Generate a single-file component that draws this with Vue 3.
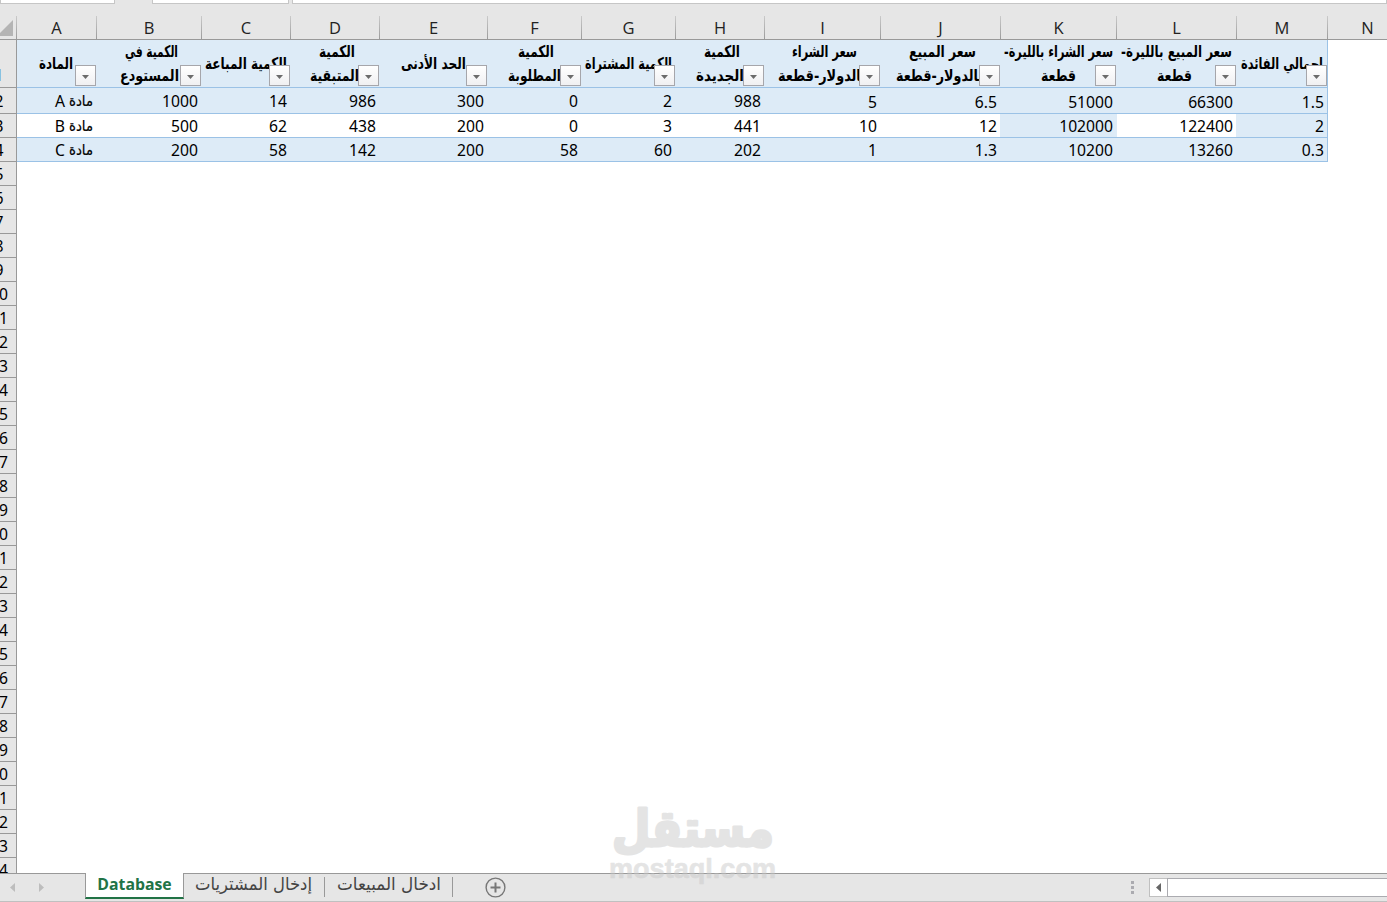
<template>
  <div class="excel">
    <div class="formula-bar">
      <div class="name-box"></div>
      <div class="fx-box"></div>
      <div class="formula-input"></div>
    </div>

    <div class="col-headers">
      <div class="corner">
        <svg width="13" height="16" viewBox="0 0 13 16"><path d="M13 0V16H-3Z" fill="#b4b4b4" /></svg>
      </div>
      <div v-for="c in columns" :key="c.name" class="col-header" :style="{ width: c.width + 'px' }">{{ c.name }}</div>
    </div>

    <div class="sheet">
      <div class="row-headers">
        <div v-for="n in 34" :key="n" class="row-header" :class="{ first: n === 1, second: n === 2 }">
          <span>{{ n }}</span>
        </div>
      </div>

      <div class="table">
        <div class="row head">
          <div v-for="c in tableColumns" :key="c.name" class="head-cell" :style="{ width: c.width + 'px' }">
            <svg
              v-for="line in c.lines"
              :key="line.text"
              class="line"
              :width="line.width"
              height="24"
              :style="{ marginLeft: line.left + 'px' }"
            >
              <text :x="line.width" y="17" direction="rtl" :textLength="line.width" lengthAdjust="spacingAndGlyphs">{{ line.text }}</text>
            </svg>
            <button class="filter">
              <svg width="7" height="4" viewBox="0 0 7 4"><path d="M0 0H7L3.5 4Z" fill="#6b6b6b" /></svg>
            </button>
          </div>
        </div>
        <div v-for="(row, r) in rows" :key="r" class="row" :class="'row-' + r">
          <div
            v-for="(value, i) in row"
            :key="i"
            class="cell"
            :class="{ plain: r === 1 && i !== 10 && i !== 12, edge: r === 1 && (i === 9 || i === 11), low: r === 0 && i > 7 }"
            :style="{ width: columns[i].width + 'px' }"
          >
            <template v-if="i === 0">
              <span class="letter">{{ value }}</span>
              <svg class="item" width="24" height="22">
                <text x="24" y="16" direction="rtl" textLength="24" lengthAdjust="spacingAndGlyphs">مادة</text>
              </svg>
            </template>
            <template v-else>{{ value }}</template>
          </div>
        </div>
      </div>
    </div>

    <div class="tab-bar">
      <div class="tab-nav">
        <svg width="5" height="9" viewBox="0 0 5 9"><path d="M5 0V9L0 4.5Z" fill="#bdbdbd" /></svg>
        <svg width="5" height="9" viewBox="0 0 5 9"><path d="M0 0V9L5 4.5Z" fill="#bdbdbd" /></svg>
      </div>
      <div class="tab active">Database</div>
      <div class="tab purchases">
        <svg width="117" height="27">
          <text x="117" y="16" direction="rtl" textLength="117" lengthAdjust="spacingAndGlyphs">إدخال المشتريات</text>
        </svg>
      </div>
      <div class="tab sales">
        <svg width="104" height="27">
          <text x="104" y="16" direction="rtl" textLength="104" lengthAdjust="spacingAndGlyphs">ادخال المبيعات</text>
        </svg>
      </div>
      <svg class="add" width="21" height="21" viewBox="0 0 21 21">
        <circle cx="10.5" cy="10.5" r="9.4" fill="none" stroke="#777" stroke-width="1.4" />
        <path d="M10.5 5.5V15.5M5.5 10.5H15.5" stroke="#777" stroke-width="2" />
      </svg>
      <div class="grip"><i></i><i></i><i></i></div>
      <div class="scroll-left">
        <svg width="5" height="9" viewBox="0 0 5 9"><path d="M5 0V9L0 4.5Z" fill="#666" /></svg>
      </div>
      <div class="scroll-track"></div>
    </div>

    <svg class="watermark" width="170" height="90" viewBox="0 0 170 90">
      <text class="mark-ar" x="166" y="46" direction="rtl" textLength="162" lengthAdjust="spacingAndGlyphs">مستقل</text>
      <text class="mark-en" x="1" y="78" textLength="167" lengthAdjust="spacingAndGlyphs">mostaql.com</text>
    </svg>
  </div>
</template>

<script setup>
// left = distance from the column's left edge
const columns = [
  { name: 'A', width: 80, lines: [{ text: 'المادة', left: 22, width: 34 }] },
  { name: 'B', width: 105, lines: [{ text: 'الكمية في', left: 28, width: 53 }, { text: 'المستودع', left: 23, width: 59 }] },
  { name: 'C', width: 89, lines: [{ text: 'الكمية المباعة', left: 3, width: 82 }] },
  { name: 'D', width: 89, lines: [{ text: 'الكمية', left: 28, width: 36 }, { text: 'المتبقية', left: 19, width: 49 }] },
  { name: 'E', width: 108, lines: [{ text: 'الحد الأدنى', left: 21, width: 65 }] },
  { name: 'F', width: 94, lines: [{ text: 'الكمية', left: 30, width: 36 }, { text: 'المطلوبة', left: 20, width: 53 }] },
  { name: 'G', width: 94, lines: [{ text: 'الكمية المشتراة', left: 3, width: 87 }] },
  { name: 'H', width: 89, lines: [{ text: 'الكمية', left: 28, width: 36 }, { text: 'الجديدة', left: 20, width: 48 }] },
  { name: 'I', width: 116, lines: [{ text: 'سعر الشراء', left: 27, width: 65 }, { text: 'بالدولار-قطعة', left: 13, width: 88 }] },
  { name: 'J', width: 120, lines: [{ text: 'سعر المبيع', left: 28, width: 67 }, { text: 'بالدولار-قطعة', left: 15, width: 87 }] },
  { name: 'K', width: 116, lines: [{ text: 'سعر الشراء بالليرة-', left: 3, width: 109 }, { text: 'قطعة', left: 40, width: 35 }] },
  { name: 'L', width: 120, lines: [{ text: 'سعر المبيع بالليرة-', left: 4, width: 111 }, { text: 'قطعة', left: 40, width: 35 }] },
  { name: 'M', width: 91, lines: [{ text: 'اجمالي الفائدة', left: 4, width: 82 }] },
  { name: 'N', width: 80 },
]
const tableColumns = columns.slice(0, 13)

const rows = [
  ['A', 1000, 14, 986, 300, 0, 2, 988, 5, 6.5, 51000, 66300, 1.5],
  ['B', 500, 62, 438, 200, 0, 3, 441, 10, 12, 102000, 122400, 2],
  ['C', 200, 58, 142, 200, 58, 60, 202, 1, 1.3, 10200, 13260, 0.3],
]
</script>

<style>
body {
  margin: 0;
  overflow: hidden;
}
</style>

<style scoped>
.excel {
  position: relative;
  width: 1387px;
  height: 902px;
  overflow: hidden;
  display: flex;
  flex-direction: column;
  background: #fff;
  font-family: "Noto Sans", "DejaVu Sans", sans-serif;
  font-size: 15.7px;
  color: #000;
}
.excel * {
  box-sizing: border-box;
}
svg {
  display: block;
  flex: none;
  overflow: visible;
}
.formula-bar {
  display: flex;
  height: 16px;
  flex: none;
  background: #e6e6e6;
}
.formula-bar div {
  height: 4px;
  background: #fff;
  border: 1px solid #c6c6c6;
  border-top: 0;
}
.name-box {
  width: 115px;
}
.fx-box {
  width: 137px;
  margin: 0 3px 0 37px;
}
.formula-input {
  flex: 1;
}
.col-headers {
  display: flex;
  height: 24px;
  flex: none;
  background: #e6e6e6;
  border-bottom: 1px solid #999;
}
.corner {
  width: 17px;
  flex: none;
  padding-top: 4px;
  border-right: 1px solid;
  border-image: linear-gradient(#ccc, #999) 1;
  overflow: hidden;
}
.col-header {
  flex: none;
  text-align: center;
  font-family: "Open Sans", sans-serif;
  font-size: 16.5px;
  line-height: 24px;
  color: #222;
  border-right: 1px solid;
  border-image: linear-gradient(#ccc, #999) 1;
}
.sheet {
  display: flex;
  height: 833px;
  flex: none;
  overflow: hidden;
}
.row-headers {
  width: 17px;
  flex: none;
  overflow: hidden;
  background: #e6e6e6;
  border-right: 1px solid #999;
}
.row-header {
  display: flex;
  align-items: flex-end;
  justify-content: center;
  width: 34px;
  height: 24px;
  margin-left: -18px;
  line-height: 22px;
  border-bottom: 1px solid #999;
}
.row-header.first {
  height: 48px;
  align-items: center;
  padding-top: 23px;
  color: #00004c;
}
.row-header.second {
  height: 26px;
  padding-bottom: 1px;
}
.row {
  display: flex;
  height: 24px;
  border-bottom: 1px solid #9bc2e6;
  background: #ddebf7;
}
.table {
  width: 1311px;
  height: 122px;
  border-right: 1px solid #9bc2e6;
}
.row.head {
  height: 48px;
}
.row-0 {
  height: 26px;
}
.head-cell {
  position: relative;
  display: flex;
  flex-direction: column;
  justify-content: center;
  height: 48px;
  flex: none;
}
.line text {
  font: bold 16px "DejaVu Sans", sans-serif;
}
.filter {
  position: absolute;
  right: 1px;
  top: 25px;
  width: 21px;
  height: 21px;
  padding: 2px 0 0;
  display: flex;
  align-items: center;
  justify-content: center;
  border: 1px solid #a6a6ab;
  background: linear-gradient(#fff, #f0f0f2);
}
.cell {
  display: flex;
  justify-content: flex-end;
  align-items: flex-end;
  flex: none;
  padding-right: 4px;
  line-height: 22px;
}
.row-0 .cell {
  padding-bottom: 1px;
}
.row-0 .cell.low {
  padding-bottom: 0;
}
.cell.plain {
  background: #fff;
}
.cell.edge {
  box-shadow: inset -1px 0 #ddebf7;
}
.item {
  margin-left: 4px;
}
.item text {
  font: 15px "DejaVu Sans", sans-serif;
  stroke: #000;
  stroke-width: 0.2px;
}
.tab-bar {
  display: flex;
  height: 29px;
  flex: none;
  background: #e6e6e6;
  border-top: 1px solid #999;
  border-bottom: 1px solid #c0c0c0;
}
.tab-nav {
  display: flex;
  width: 85px;
  gap: 24px;
  padding: 9px 0 0 10px;
}
.tab.active {
  width: 99px;
  height: 26px;
  margin-top: -1px;
  text-align: center;
  font: bold 15.8px/23px "Open Sans", sans-serif;
  color: #217346;
  background: #fff;
  border: 1px solid #999;
  border-top: 0;
  border-bottom: 2px solid #217346;
}
.tab text {
  font: 17.5px "DejaVu Sans", sans-serif;
  fill: #444;
}
.purchases,
.sales {
  height: 20px;
  margin-top: 3px;
  border-right: 1px solid #999;
}
.purchases svg,
.sales svg {
  margin-top: -3px;
}
.purchases {
  width: 141px;
  padding-left: 11px;
}
.sales {
  width: 128px;
  padding-left: 12px;
}
.add {
  margin: 3px 0 0 32px;
}
.grip {
  display: flex;
  flex-direction: column;
  gap: 2px;
  margin: 7px 15px 0 auto;
}
.grip i {
  width: 3px;
  height: 3px;
  background: #ababb0;
}
.scroll-left {
  display: flex;
  align-items: center;
  justify-content: center;
  width: 19px;
  height: 19px;
  margin-top: 4px;
  margin-right: -1px;
  background: #fff;
  border: 1px solid #c0c0c0;
}
.scroll-track {
  width: 220px;
  height: 19px;
  margin-top: 4px;
  background: #fff;
  border: 1px solid #ababb0;
  border-right: 0;
}
.watermark {
  position: absolute;
  left: 608px;
  top: 800px;
  opacity: 0.48;
}
.watermark text {
  fill: #c8c8c8;
  stroke: #c8c8c8;
  stroke-linejoin: round;
}
.mark-ar {
  font: bold 50px "DejaVu Sans", sans-serif;
  stroke-width: 3px;
}
.mark-en {
  font: bold 27px "Liberation Sans", sans-serif;
  stroke-width: 0.6px;
}
</style>
